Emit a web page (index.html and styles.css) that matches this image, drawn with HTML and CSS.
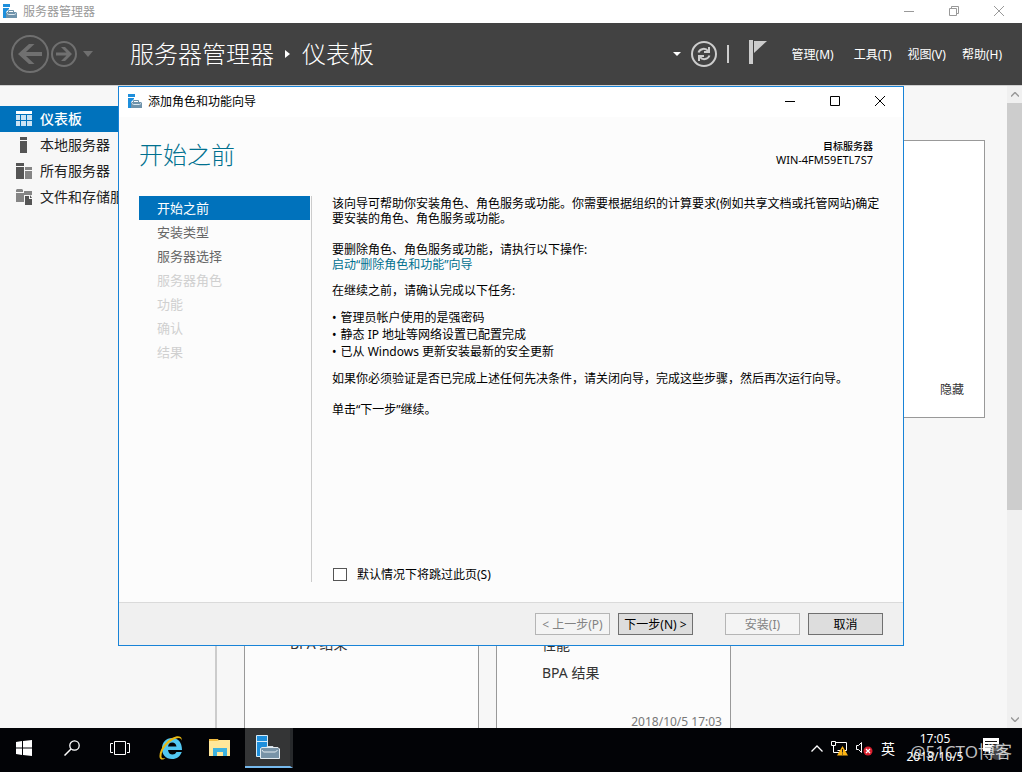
FILE: index.html
```html
<!DOCTYPE html>
<html lang="zh-CN">
<head>
<meta charset="utf-8">
<title>服务器管理器</title>
<link rel="stylesheet" href="styles.css">
</head>
<body>
<svg class="defs" aria-hidden="true">
  <symbol id="i-server" viewBox="0 0 14 14">
    <path fill="#1e8fdc" d="M0 0h7v3H0zM0 4h6v1L3 8v6H0z"/>
    <path fill="none" stroke="#6f93ab" d="M5.500 8V6.500h5V8"/>
    <path fill="#6f93ab" d="M4 8h9l1 1v5H3V9z"/>
    <path stroke="#dce8f0" fill="none" d="M4 9.500l1.500 1h6l1.500-1"/>
  </symbol>
  <symbol id="i-min" viewBox="0 0 10 10"><path d="M0 5.500h10" stroke="currentColor"/></symbol>
  <symbol id="i-close" viewBox="0 0 10 10"><path d="M0 0l10 10M10 0L0 10" stroke="currentColor"/></symbol>
</svg>

<header class="titlebar">
  <svg class="app-icon"><use href="#i-server"/></svg>
  <span class="titlebar-text">服务器管理器</span>
  <div class="win-controls">
    <button class="win-btn" aria-label="最小化"><svg class="glyph"><use href="#i-min"/></svg></button>
    <button class="win-btn" aria-label="还原"><svg class="glyph" viewBox="0 0 10 10"><path fill="none" stroke="currentColor" d="M.5 2.500h7v7h-7zM2.500 2.500v-2h7v7h-2"/></svg></button>
    <button class="win-btn" aria-label="关闭"><svg class="glyph"><use href="#i-close"/></svg></button>
  </div>
</header>

<div class="banner">
  <div class="history">
    <button class="icon-btn" aria-label="后退"><svg width="38" height="38" viewBox="0 0 38 38"><circle cx="19" cy="19" r="18" fill="none" stroke="#6f6f6f" stroke-width="2"/><path fill="#707070" d="M7 19L18 9h5.500L15 17h16v4H15l8.500 8H18z"/></svg></button>
    <button class="icon-btn" aria-label="前进"><svg width="26" height="26" viewBox="0 0 26 26"><circle cx="13" cy="13" r="12" fill="none" stroke="#6f6f6f" stroke-width="2"/><path fill="#707070" d="M21 13l-7-7h-4l5.500 5.500H5v3h10.500L10 20h4z"/></svg></button>
    <button class="icon-btn" aria-label="历史记录"><svg width="10" height="6" viewBox="0 0 10 6"><path fill="#6f6f6f" d="M0 0h10L5 6z"/></svg></button>
  </div>
  <h1 class="crumbs">服务器管理器<svg width="6" height="8" viewBox="0 0 6 8"><path fill="#fff" d="M0 0l5 4-5 4z"/></svg>仪表板</h1>
  <div class="tools">
    <button class="icon-btn" aria-label="更多"><svg width="8" height="4" viewBox="0 0 8 4"><path fill="#fff" d="M0 0h8L4 4z"/></svg></button>
    <button class="icon-btn" aria-label="刷新"><svg width="26" height="26" viewBox="0 0 26 26"><circle cx="13" cy="13" r="12" fill="none" stroke="#ccc" stroke-width="2"/><path fill="none" stroke="#ccc" stroke-width="2" d="M7.500 11.500c1.500-4 7-5 9.500-1.500M18.500 14.500c-1.500 4-7 5-9.500 1.500"/><path fill="#ccc" d="M19 6v6h-6v-2h4V6zM7 20v-6h6v2H9v4z"/></svg></button>
    <span class="tool-sep"></span>
    <button class="icon-btn flag" aria-label="通知"><svg width="18" height="24" viewBox="0 0 18 24"><path fill="#ccc" d="M0 0h4v24H0z"/><path fill="#ccc" d="M5 1h13L5 13z"/></svg></button>
    <nav class="menu">
      <button class="menu-item wide">管理(M)</button><button class="menu-item">工具(T)</button><button class="menu-item">视图(V)</button><button class="menu-item">帮助(H)</button>
    </nav>
  </div>
</div>

<main class="workspace">
  <nav class="sidebar">
    <a class="side-item current" href="#"><svg class="side-icon" viewBox="0 0 16 16"><path fill="#fff" d="M0 0h16v3H0z"/><path fill="#cce4f4" d="M0 4h4v5H0zM5 4h5v5H5zM11 4h5v5h-5zM0 10h4v5H0zM5 10h5v5H5zM11 10h5v5h-5z"/></svg><span class="side-text">仪表板</span></a>
    <a class="side-item" href="#"><svg class="side-icon" viewBox="0 0 16 16"><path fill="#555" d="M4 0h7v3H4zM4 4h7v12H4z"/></svg><span class="side-text">本地服务器</span></a>
    <a class="side-item" href="#"><svg class="side-icon" viewBox="0 0 16 16"><path fill="#555" d="M0 0h8v3H0zM0 4h8v12H0z"/><path fill="#858585" d="M9 4h7v3H9zM9 8h7v8H9z"/></svg><span class="side-text">所有服务器</span></a>
    <a class="side-item" href="#"><svg class="side-icon" viewBox="0 0 16 16"><path fill="#858585" d="M1 0h5l1 1v2H0V1zM8 2h8v4H8v7H0V4h8z"/><path fill="#555" d="M9 7h4v3h3v6H9zM14 6l2 3h-2z"/></svg><span class="side-text">文件和存储服务</span></a>
  </nav>
  <div class="dashboard">
    <section class="welcome"><button class="hide-btn">隐藏</button></section>
    <div class="tiles">
      <section class="tile tile-short"><span class="tile-row">BPA 结果</span></section>
      <section class="tile"><span class="tile-row">性能</span><span class="tile-row">BPA 结果</span><time class="tile-time">2018/10/5 17:03</time></section>
    </div>
  </div>
  <div class="scrollbar">
    <svg width="8" height="5" viewBox="0 0 8 5"><path fill="none" stroke="#999" stroke-width="1.500" d="M0 4.500l4-4 4 4"/></svg>
    <div class="track"><div class="thumb"></div></div>
    <svg width="8" height="5" viewBox="0 0 8 5"><path fill="none" stroke="#999" stroke-width="1.500" d="M0 .5l4 4 4-4"/></svg>
  </div>
</main>

<section class="wizard" role="dialog" aria-labelledby="wizard-name">
  <header class="wizard-bar">
    <svg class="app-icon"><use href="#i-server"/></svg>
    <span id="wizard-name">添加角色和功能向导</span>
    <div class="win-controls">
      <button class="win-btn" aria-label="最小化"><svg class="glyph"><use href="#i-min"/></svg></button>
      <button class="win-btn" aria-label="最大化"><svg class="glyph" viewBox="0 0 10 10"><path fill="none" stroke="currentColor" d="M.5.5h9v9h-9z"/></svg></button>
      <button class="win-btn" aria-label="关闭"><svg class="glyph"><use href="#i-close"/></svg></button>
    </div>
  </header>
  <div class="wizard-head">
    <h2 class="wizard-title">开始之前</h2>
    <div class="target"><strong class="target-label">目标服务器</strong><span>WIN-4FM59ETL7S7</span></div>
  </div>
  <div class="wizard-body">
    <ol class="steps">
      <li class="step active">开始之前</li>
      <li class="step">安装类型</li>
      <li class="step">服务器选择</li>
      <li class="step off">服务器角色</li>
      <li class="step off">功能</li>
      <li class="step off">确认</li>
      <li class="step off">结果</li>
    </ol>
    <div class="page">
      <p class="para">该向导可帮助你安装角色、角色服务或功能。你需要根据组织的计算要求(例如共享文档或托管网站)确定要安装的角色、角色服务或功能。</p>
      <p class="para wide-gap">要删除角色、角色服务或功能，请执行以下操作:<br><a class="link" href="#">启动“删除角色和功能”向导</a></p>
      <p class="para">在继续之前，请确认完成以下任务:</p>
      <ul class="tasks">
        <li>管理员帐户使用的是强密码</li>
        <li>静态 IP 地址等网络设置已配置完成</li>
        <li>已从 Windows 更新安装最新的安全更新</li>
      </ul>
      <p class="para">如果你必须验证是否已完成上述任何先决条件，请关闭向导，完成这些步骤，然后再次运行向导。</p>
      <p class="para wide-gap">单击“下一步”继续。</p>
      <label class="skip"><input class="skip-box" type="checkbox">默认情况下将跳过此页(S)</label>
    </div>
  </div>
  <footer class="wizard-foot">
    <div class="btn-pair"><button class="btn" disabled>&lt; 上一步(P)</button><button class="btn">下一步(N) &gt;</button></div>
    <div class="btn-pair"><button class="btn" disabled>安装(I)</button><button class="btn">取消</button></div>
  </footer>
</section>

<footer class="taskbar">
  <div class="launch">
    <button class="task" aria-label="开始"><svg width="16" height="16" viewBox="0 0 16 16"><path fill="#fff" d="M0 2l6-1v6.500H0zM7 1l9-1v7.500H7zM0 8.500h6V15l-6-1zM7 8.500h9V16l-9-1z"/></svg></button>
    <button class="task" aria-label="搜索"><svg width="16" height="16" viewBox="0 0 16 16"><circle cx="10.500" cy="5.500" r="4.700" fill="none" stroke="#fff" stroke-width="1.300"/><path stroke="#fff" stroke-width="1.500" d="M7 9l-6.500 6.500"/></svg></button>
    <button class="task" aria-label="任务视图"><svg width="20" height="14" viewBox="0 0 20 14"><path fill="none" stroke="#fff" d="M4.500.5h11v13h-11zM3 2.500H.5v9H3M17 2.500h2.500v9H17"/></svg></button>
  </div>
  <div class="apps">
    <button class="task" aria-label="Internet Explorer"><svg width="24" height="24" viewBox="0 0 24 24"><path fill="#52c8f2" fill-rule="evenodd" d="M13 2c6 0 10 4 10 12H9c.5 3 2 4.500 4.500 4.500 2 0 3-.8 4-2.500h5.300C21 20.500 18 23 13 23 6.500 23 3 18.500 3 12.500S7 2 13 2zM9 10.500h8.500C17 8 15.500 6.500 13.200 6.500S9.500 8 9 10.500z"/><path fill="#e9b913" d="M22.500 5C23 2 20 1 16 3 9 6 2 14 2.500 21c.3 1.600 2 1.700 4 .8-1.500 2.500-6 2.700-6-1.300C0 13 9 2 17 .5c4-.8 6.500 1 5.500 4.500z"/></svg></button>
    <button class="task" aria-label="文件资源管理器"><svg width="22" height="20" viewBox="0 0 22 20"><path fill="#f3bd43" d="M0 1h9l1 2H0z"/><path fill="#ffe79a" d="M0 3h8l2-1h11v16H0z"/><path fill="#3db2df" d="M4 18v-8h14v8h-4v-4H8v4z"/></svg></button>
    <button class="task running" aria-label="服务器管理器"><svg width="24" height="24" viewBox="0 0 24 24"><path fill="#1e8fdc" stroke="#d5ebf8" d="M.5.5h11v21H.5zM.5 6.500h11"/><path fill="none" stroke="#d5e0e8" d="M11 13v-1.500h6V13"/><path fill="#7893a7" stroke="#e3ebf0" d="M4.500 13.500L6 12.500h16l1.500 1.500v9.500h-19z"/><path stroke="#e3ebf0" fill="none" d="M6 15l1.500 2h12l2-2"/></svg></button>
  </div>
  <div class="tray">
    <svg width="12" height="7" viewBox="0 0 12 7"><path fill="none" stroke="#fff" stroke-width="1.300" d="M.5 6.500L6 1l5.500 5.500"/></svg>
    <svg width="17" height="15" viewBox="0 0 17 15"><path fill="none" stroke="#fff" d="M5 1.500h10.500v8h-9M2.500 5v6.500H8M.5.500h4v4h-4z"/><path fill="#fcb414" d="M11.500 5L17 14.500H6z"/><path stroke="#222" d="M11.500 8v3.500M11.500 12.500v1"/></svg>
    <svg width="17" height="15" viewBox="0 0 17 15"><path fill="none" stroke="#fff" d="M.5 4.500h2l3-3v10l-3-3h-2z"/><circle cx="12" cy="10" r="4.500" fill="#d9202e"/><path stroke="#fff" stroke-width="1.300" d="M10 8l4 4M14 8l-4 4"/></svg>
    <span class="ime">英</span>
    <time class="clock"><span>17:05</span><span>2018/10/5</span></time>
    <svg width="27" height="28" viewBox="0 0 27 28"><path fill="#fff" d="M1 4h16v13h-7l-3 3v-3H1z"/><path stroke="#111" d="M3 7.500h12M3 10.500h12M3 13.500h12"/><circle cx="16" cy="18" r="8" fill="#4a4b4d" fill-opacity=".85"/></svg>
  </div>
  <span class="watermark">@51CTO博客</span>
</footer>
</body>
</html>
```
FILE: styles.css
```css
* { box-sizing: border-box; }
body {
  margin: 0;
  height: 100vh;
  display: flex;
  flex-direction: column;
  overflow: hidden;
  position: relative;
  background: #f7f7f7;
  color: #000;
  font: 12px/15px "Noto Sans", "Noto Sans CJK SC", sans-serif;
}
button { font: inherit; color: inherit; background: none; border: 0; padding: 0; }
svg { display: block; flex: none; }
.defs { position: absolute; width: 0; height: 0; }
h1, h2, p, ul, ol { margin: 0; padding: 0; font-weight: 300; }

.app-icon { width: 14px; height: 14px; }
.glyph { width: 10px; height: 10px; }
.win-controls { display: flex; margin-left: auto; align-self: stretch; }
.win-btn { width: 45px; display: flex; align-items: center; justify-content: center; }

.titlebar { height: 23px; flex: none; display: flex; align-items: center; gap: 6px; padding: 0 1px 1px 3px; background: #fff; color: #999; }

.banner { height: 63px; flex: none; display: flex; align-items: center; padding: 0 20px 0 11px; background: #424242; border-bottom: 1px solid #d0d0d0; color: #fff; }
.history { display: flex; align-items: center; gap: 2px; width: 119px; }
.history .icon-btn:last-child { margin-left: 4px; }
.crumbs { display: flex; align-items: center; gap: 11px; font-size: 24px; line-height: 32px; white-space: nowrap; }
.tools { display: flex; align-items: center; margin-left: auto; gap: 10px; }
.tool-sep { width: 2px; height: 18px; background: #ccc; }
.flag { margin: 0 15px 4px 10px; }
.menu { display: flex; gap: 16px; }
.menu-item { white-space: nowrap; }
.wide { margin-right: 4px; }

.workspace { flex: 1; min-height: 0; display: flex; overflow: hidden; }
.sidebar { width: 217px; flex: none; padding-top: 20px; border-right: 2px solid #ccc; }
.side-item { display: flex; align-items: center; gap: 8px; height: 26px; padding-left: 16px; font-size: 14px; color: #222; text-decoration: none; }
.side-icon { width: 16px; height: 16px; }
.side-text { padding-bottom: 2px; }
.current { background: #0072bc; color: #fff; font-weight: 500; }
.dashboard { flex: 1; min-width: 0; display: flex; flex-direction: column; gap: 40px; padding: 54px 22px 0 27px; color: #333; }
.welcome { height: 278px; flex: none; display: flex; align-items: flex-end; justify-content: flex-end; padding: 20px; background: #fff; border: 1px solid #999; }
.tiles { flex: 1; min-height: 0; display: flex; gap: 17px; }
.tile { width: 235px; display: flex; flex-direction: column; justify-content: flex-end; padding: 0 8px 0 45px; background: #fcfcfc; border: 1px solid #999; border-bottom: 0; }
.tile-short { padding-bottom: 70px; }
.tile-row { font-size: 14px; line-height: 28px; }
.tile-time { margin-top: 28px; font-size: 12px; line-height: 13px; text-align: right; color: #777; }
.scrollbar { width: 15px; flex: none; display: flex; flex-direction: column; align-items: center; gap: 6px; padding: 6px 0; background: #f0f0f0; }
.track { flex: 1; width: 100%; }
.thumb { height: 67%; background: #cdcdcd; }

.wizard { position: absolute; inset: 86px 118px 126px 118px; display: flex; flex-direction: column; background: #fcfcfc; border: 1px solid #1883d7; }
.wizard-bar { height: 30px; flex: none; display: flex; align-items: center; gap: 6px; padding: 0 1px 2px 9px; background: #fff; }
.wizard-head { height: 79px; flex: none; display: flex; align-items: flex-start; justify-content: space-between; padding: 22px 30px 0 20px; }
.wizard-title { font-size: 24px; line-height: 32px; color: #00708f; }
.target { display: flex; flex-direction: column; text-align: right; font-size: 11px; line-height: 13px; padding-top: 1px; }
.target-label { font-size: 10px; font-weight: 500; }
.wizard-body { flex: 1; min-height: 0; display: flex; padding: 0 20px 20px; }
.steps { width: 173px; flex: none; list-style: none; padding-right: 1px; border-right: 1px solid #ccc; font-weight: 400; }
.step { padding-left: 18px; font-size: 13px; line-height: 24px; color: #666; }
.active { background: #0072bc; color: #fff; }
.off { color: #d0d0d0; }
.page { flex: 1; display: flex; flex-direction: column; gap: 11px; padding-left: 20px; font-weight: 400; }
.para { font-weight: 400; }
.wide-gap { margin-top: 5px; }
.link { color: #00708f; text-decoration: none; }
.tasks { list-style: none; font-weight: 400; line-height: 17px; }
.tasks li { display: flex; gap: 4px; }
.tasks li::before { content: "•"; }
.skip { display: flex; align-items: center; gap: 10px; margin-top: auto; padding-left: 1px; }
.skip-box { appearance: none; width: 14px; height: 13px; margin: 0; border: 1px solid #555; background: #fff; }
.wizard-foot { height: 43px; flex: none; display: flex; justify-content: flex-end; align-items: center; gap: 32px; padding-right: 20px; background: #f0f0f0; border-top: 1px solid #dadada; }
.btn-pair { display: flex; gap: 8px; }
.btn { width: 75px; height: 22px; background: #ddd; border: 1px solid #707070; white-space: nowrap; }
.btn:disabled { background: #f4f4f4; border-color: #b5b5b5; color: #838383; }

.taskbar { position: relative; height: 44px; flex: none; display: flex; padding-bottom: 4px; background: #020306; color: #fff; }
.launch, .apps { display: flex; }
.apps { gap: 1px; padding-left: 3px; }
.task { width: 48px; height: 40px; display: flex; align-items: center; justify-content: center; }
.running { background: #343536; border-bottom: 2px solid #76b9ed; border-right: 3px solid #27292b; }
.tray { display: flex; align-items: center; gap: 8px; margin-left: auto; padding-right: 13px; }
.ime { font-size: 14px; }
.clock { display: flex; flex-direction: column; align-items: center; width: 64px; margin-right: 7px; line-height: 18px; }
.watermark { position: absolute; right: 10px; bottom: 9px; font-size: 17px; line-height: 22px; font-weight: 400; color: rgba(255, 255, 255, 0.75); }
```
